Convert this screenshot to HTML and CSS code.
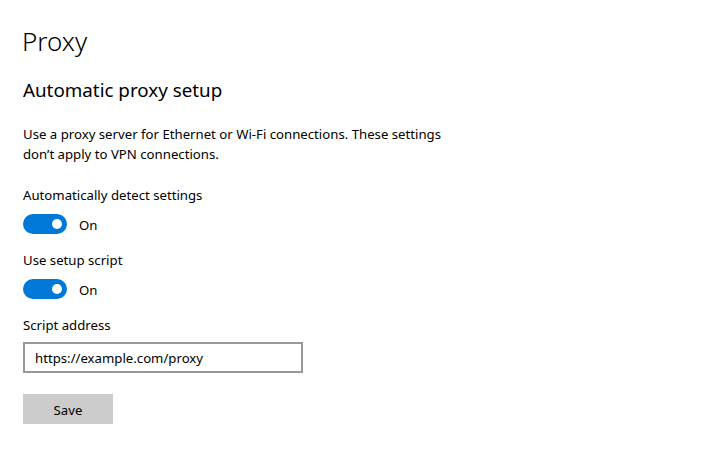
FILE: index.html
```html
<!DOCTYPE html>
<html lang="en">
<head>
<meta charset="utf-8">
<title>Proxy</title>
<link rel="stylesheet" href="styles.css">
</head>
<body>
<main class="page">
  <h1 class="title">Proxy</h1>
  <h2 class="section">Automatic proxy setup</h2>
  <p class="desc">Use a proxy server for Ethernet or Wi-Fi connections. These settings<br>don’t apply to VPN connections.</p>

  <div class="label label-first">Automatically detect settings</div>
  <div class="toggle-row">
    <span class="toggle"><span class="knob"></span></span>
    <span class="state">On</span>
  </div>

  <div class="label">Use setup script</div>
  <div class="toggle-row">
    <span class="toggle"><span class="knob"></span></span>
    <span class="state">On</span>
  </div>

  <div class="label">Script address</div>
  <div class="input">https://example.com/proxy</div>

  <button class="btn">Save</button>
</main>
</body>
</html>
```
FILE: styles.css
```css
html, body {
  margin: 0;
  padding: 0;
  background: #ffffff;
}
body {
  font-family: "Noto Sans", "Open Sans", sans-serif;
  color: #000000;
  font-size: 13.2px;
}
.page {
  padding: 23px 0 0 23px;
  display: flex;
  flex-direction: column;
  align-items: flex-start;
}
.title {
  margin: 0 0 0 -1px;
  font-size: 26px;
  font-weight: 300;
  line-height: 36px;
}
.section {
  margin: 17px 0 0 0;
  font-size: 18.8px;
  font-weight: 400;
  line-height: 28px;
}
.desc {
  margin: 20px 0 0 0;
  font-size: 13.2px;
  line-height: 20px;
}
.label {
  margin-top: 16px;
  font-size: 13.2px;
  line-height: 20px;
}
.label-first {
  margin-top: 21px;
}
.toggle-row {
  margin-top: 9px;
  display: flex;
  align-items: center;
  gap: 12px;
  height: 20px;
}
.toggle {
  width: 44px;
  height: 20px;
  border-radius: 10px;
  background: #0078d7;
  display: flex;
  align-items: center;
  justify-content: flex-end;
  padding-right: 5px;
  box-sizing: border-box;
}
.knob {
  width: 10px;
  height: 10px;
  border-radius: 50%;
  background: #ffffff;
}
.state {
  line-height: 20px;
  padding-top: 1px;
}
.input {
  margin-top: 7px;
  width: 280px;
  height: 31px;
  box-sizing: border-box;
  border: 2px solid #999999;
  padding: 0 10px;
  display: flex;
  align-items: center;
  font-size: 13.2px;
}
.btn {
  margin-top: 21px;
  width: 90px;
  height: 30px;
  border: none;
  background: #cccccc;
  font-family: inherit;
  font-size: 13.2px;
  color: #000000;
  padding: 1px 0 0 0;
}
```
